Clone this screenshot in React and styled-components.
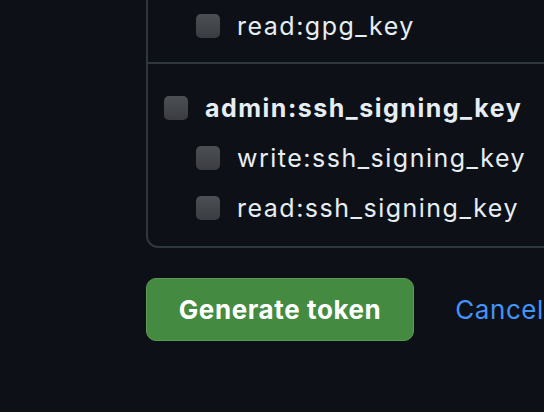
import React from 'react';
import styled, { createGlobalStyle } from 'styled-components';

const GlobalStyle = createGlobalStyle`
  html, body {
    margin: 0;
    padding: 0;
    background-color: #0d1117;
    overflow: hidden;
  }
  body {
    font-family: Inter, "Liberation Sans", sans-serif;
    color: #e6edf3;
  }
`

const Page = styled.div`
  width: 544px;
  height: 412px;
  padding-left: 146px;
  box-sizing: border-box;
  overflow: hidden;
`

const ScopeBox = styled.div`
  width: 440px;
  border: 2px solid #30363d;
  border-top: none;
  border-radius: 0 0 12px 12px;
`

const Group = styled.div`
  padding: ${props => props.first ? '14px 16px 24px' : '32px 16px 26px'};
  border-bottom: ${props => props.last ? 'none' : '2px solid #30363d'};
  display: flex;
  flex-direction: column;
  gap: 26px;
`

const Row = styled.label`
  display: flex;
  align-items: center;
  gap: 17px;
  height: 24px;
  padding-left: ${props => props.child ? '32px' : '0'};
  font-size: 25px;
  letter-spacing: 1.5px;
  font-weight: ${props => props.child ? 400 : 700};
  color: #e6edf3;
  white-space: nowrap;
`

const Box = styled.span`
  flex: none;
  width: 24px;
  height: 24px;
  border-radius: 5px;
  background: linear-gradient(#4c4f54, #3a3c41);
`

const Actions = styled.div`
  display: flex;
  align-items: center;
  gap: 41px;
  margin-top: 30px;
`

const GenerateButton = styled.button`
  width: 270px;
  height: 63px;
  border: 1px solid #5a9a52;
  border-radius: 10px;
  background-color: #448a41;
  color: #ffffff;
  font-family: inherit;
  font-size: 26px;
  letter-spacing: 0.6px;
  font-weight: 700;
  cursor: pointer;
`

const CancelLink = styled.a`
  font-size: 26px;
  letter-spacing: 0.6px;
  color: #4493f8;
  text-decoration: none;
  white-space: nowrap;
`

const Scope = ({ child, label }) => (
  <Row child={child ? 1 : 0}>
    <Box />
    <span>{label}</span>
  </Row>
)

export default function App() {
  return (
    <>
      <GlobalStyle />
      <Page>
        <ScopeBox>
          <Group first>
            <Scope child label="read:gpg_key" />
          </Group>
          <Group last>
            <Scope label="admin:ssh_signing_key" />
            <Scope child label="write:ssh_signing_key" />
            <Scope child label="read:ssh_signing_key" />
          </Group>
        </ScopeBox>
        <Actions>
          <GenerateButton>Generate token</GenerateButton>
          <CancelLink href="#">Cancel</CancelLink>
        </Actions>
      </Page>
    </>
  )
}
